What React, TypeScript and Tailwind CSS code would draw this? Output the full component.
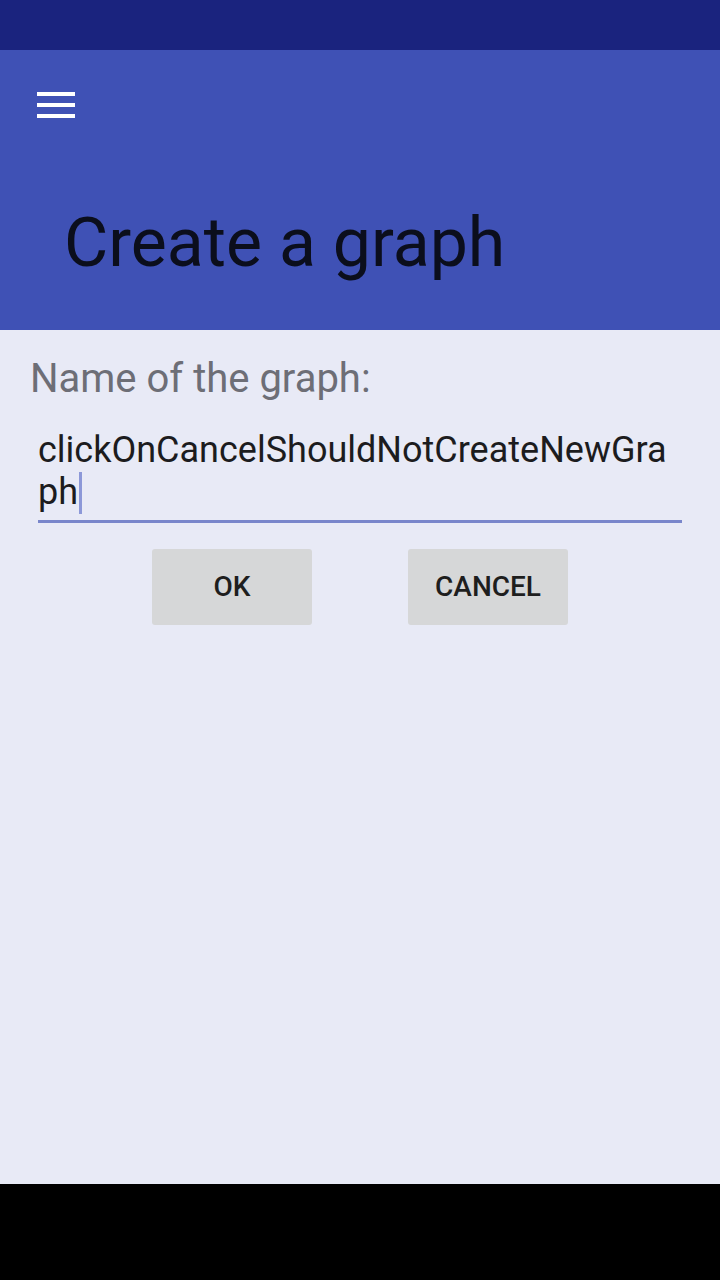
import React from "react";

export default function App() {
  const font = { fontFamily: "Roboto, 'Noto Sans', sans-serif" } as React.CSSProperties;
  return (
    <div className="flex h-[1280px] w-[720px] flex-col overflow-hidden bg-[#e8eaf6]" style={font}>
      <div className="h-[50px] w-full shrink-0 bg-[#1a237e]" />
      <div className="flex h-[280px] w-full shrink-0 flex-col bg-[#3f51b5]">
        <div className="pl-[37px] pt-[42px]">
          <svg width="38" height="26" viewBox="0 0 38 26" className="block">
            <rect x="0" y="0" width="38" height="4" fill="#ffffff" />
            <rect x="0" y="11" width="38" height="4" fill="#ffffff" />
            <rect x="0" y="22" width="38" height="4" fill="#ffffff" />
          </svg>
        </div>
        <div className="pl-[64px] pt-[91px] text-[68px] leading-[68px] text-[#0b0e1c]">Create a graph</div>
      </div>
      <div className="flex flex-1 flex-col">
        <div className="pl-[30px] pt-[26px] text-[40px] leading-[46px] text-[#6d6e76]">Name of the graph:</div>
        <div className="mx-[38px] mt-[27px] border-b-[3px] border-[#7986cb] pb-[6px]">
          <div className="text-[36px] leading-[42px] text-[#1c1c1e]">
            <div>clickOnCancelShouldNotCreateNewGra</div>
            <div className="flex items-start">
              <span>ph</span>
              <span className="ml-[1px] mt-[1px] inline-block h-[42px] w-[3px] bg-[#8c98d8]" />
            </div>
          </div>
        </div>
        <div className="mt-[26px] flex justify-center gap-[96px]">
          <div className="flex h-[76px] w-[160px] items-center justify-center rounded-[3px] bg-[#d6d7d8] text-[28px] font-medium text-[#1e1e1e]">
            OK
          </div>
          <div className="flex h-[76px] w-[160px] items-center justify-center rounded-[3px] bg-[#d6d7d8] text-[28px] font-medium text-[#1e1e1e]">
            CANCEL
          </div>
        </div>
      </div>
      <div className="h-[96px] w-full shrink-0 bg-black" />
    </div>
  );
}
